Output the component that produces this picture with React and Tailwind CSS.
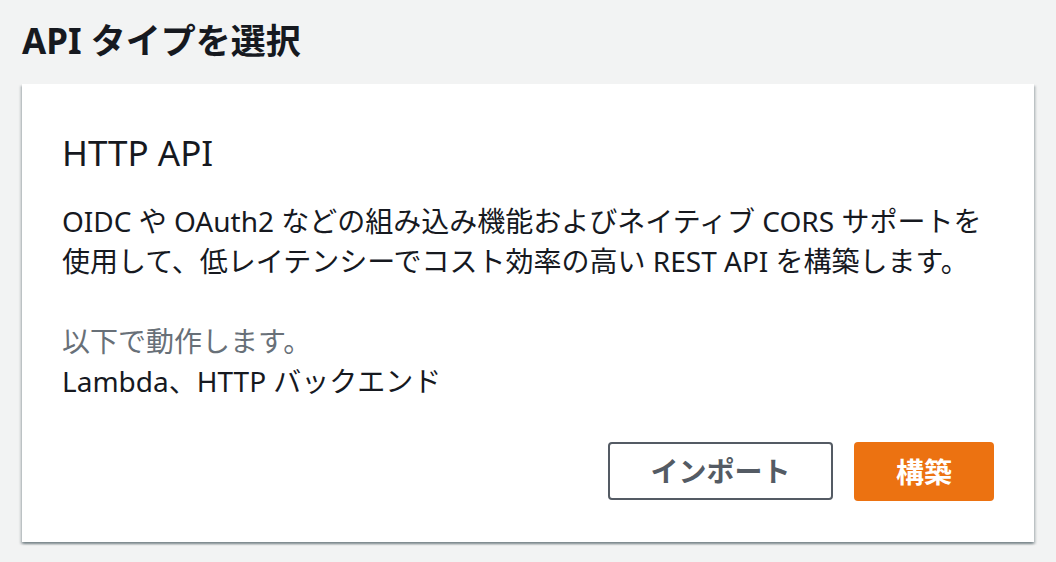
export default function App() {
  return (
    <div
      className="w-[1056px] h-[562px] bg-[#f2f3f3] px-[22px] pt-[19px] text-[#16191f] overflow-hidden"
      style={{ fontFamily: '"Noto Sans", "Noto Sans CJK JP", sans-serif' }}
    >
      <h2 className="text-[35px] leading-[44px] font-bold">API タイプを選択</h2>
      <div className="mt-[21px] w-[1012px] bg-white px-10 pt-[47px] pb-[41px] shadow-[0_2px_2px_0_rgba(0,28,36,0.3),2px_2px_2px_0_rgba(0,28,36,0.15),-2px_2px_2px_0_rgba(0,28,36,0.15)]">
        <h3 className="text-[35px] leading-[44px] font-normal">HTTP API</h3>
        <p className="mt-[26px] text-[28px] leading-[40px]">
          OIDC や OAuth2 などの組み込み機能およびネイティブ CORS サポートを
          <br />
          使用して、低レイテンシーでコスト効率の高い REST API を構築します。
        </p>
        <div className="mt-10 text-[28px] leading-[40px]">
          <div className="text-[#687078]">以下で動作します。</div>
          <div>Lambda、HTTP バックエンド</div>
        </div>
        <div className="mt-[41px] flex justify-end gap-[21px]">
          <button className="h-[58px] w-[225px] flex items-center justify-center rounded-[4px] border-2 border-[#545b64] bg-white text-[28px] font-bold text-[#545b64]">
            インポート
          </button>
          <button className="h-[59px] w-[140px] flex items-center justify-center rounded-[4px] bg-[#ec7211] text-[28px] font-bold text-white">
            構築
          </button>
        </div>
      </div>
    </div>
  );
}
